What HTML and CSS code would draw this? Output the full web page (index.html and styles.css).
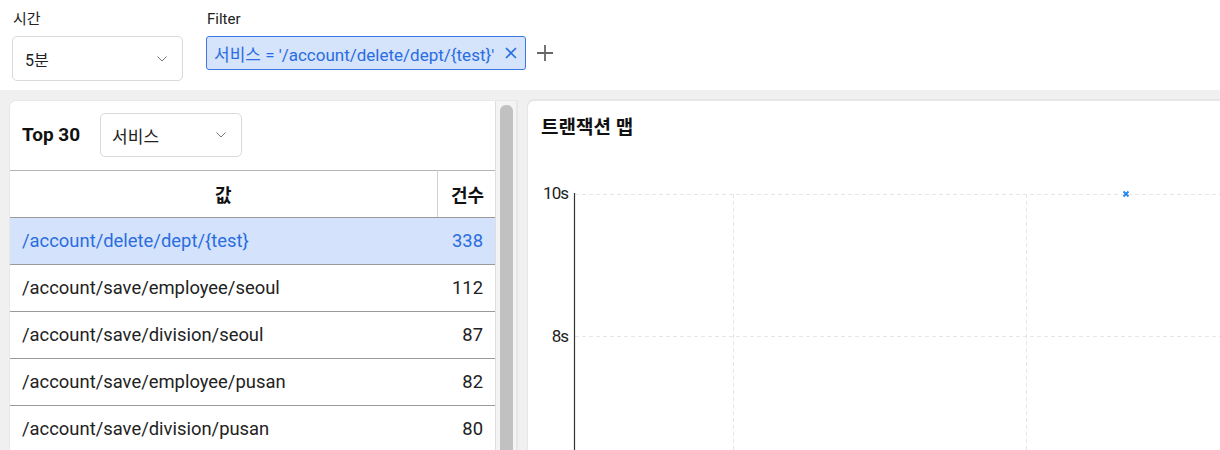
FILE: index.html
```html
<!DOCTYPE html>
<html lang="ko">
<head>
<meta charset="utf-8">
<link rel="stylesheet" href="styles.css">
</head>
<body>
<div class="topbar">
  <div class="field">
    <div class="label">시간</div>
    <div class="select time-select"><span>5분</span>
      <svg class="chev" width="10" height="6" viewBox="0 0 10 6"><path d="M0.5 0.5 L5 5 L9.5 0.5" fill="none" stroke="#777" stroke-width="1"/></svg>
    </div>
  </div>
  <div class="field">
    <div class="label">Filter</div>
    <div class="filter-row">
      <div class="chip"><span>서비스 = '/account/delete/dept/{test}'</span>
        <svg class="chip-x" width="12" height="12" viewBox="0 0 12 12"><path d="M1 1 L11 11 M11 1 L1 11" stroke="#2a6de0" stroke-width="1.6"/></svg>
      </div>
      <svg class="plus" width="18" height="18" viewBox="0 0 18 18"><path d="M9 1 V17 M1 9 H17" stroke="#666" stroke-width="1.8"/></svg>
    </div>
  </div>
</div>
<div class="main">
  <div class="left-panel">
    <div class="left-content">
      <div class="panel-head">
        <div class="panel-title">Top 30</div>
        <div class="select type-select"><span>서비스</span>
          <svg class="chev" width="10" height="6" viewBox="0 0 10 6"><path d="M0.5 0.5 L5 5 L9.5 0.5" fill="none" stroke="#777" stroke-width="1"/></svg>
        </div>
      </div>
      <table class="top-table">
        <thead>
          <tr><th class="c-val">값</th><th class="c-cnt">건수</th></tr>
        </thead>
        <tbody>
          <tr class="selected"><td>/account/delete/dept/{test}</td><td class="num">338</td></tr>
          <tr><td>/account/save/employee/seoul</td><td class="num">112</td></tr>
          <tr><td>/account/save/division/seoul</td><td class="num">87</td></tr>
          <tr><td>/account/save/employee/pusan</td><td class="num">82</td></tr>
          <tr><td>/account/save/division/pusan</td><td class="num">80</td></tr>
        </tbody>
      </table>
    </div>
    <div class="scrollbar"><div class="thumb"></div></div>
  </div>
  <div class="right-panel">
    <div class="panel-title map-title">트랜잭션 맵</div>
    <svg class="chart" width="700" height="300" viewBox="0 0 700 300">
      <g stroke="#e6e6e6" stroke-width="1" stroke-dasharray="4 3" fill="none">
        <line x1="47" y1="43.5" x2="700" y2="43.5"/>
        <line x1="47" y1="185.5" x2="700" y2="185.5"/>
        <line x1="205.5" y1="43" x2="205.5" y2="300"/>
        <line x1="498.5" y1="43" x2="498.5" y2="300"/>
      </g>
      <line x1="46.5" y1="42" x2="46.5" y2="300" stroke="#333" stroke-width="1.2"/>
      <text x="40" y="48" class="axis-label" text-anchor="end">10s</text>
      <text x="40" y="191" class="axis-label" text-anchor="end">8s</text>
      <path d="M595.5 40.5 L600.5 45.5 M600.5 40.5 L595.5 45.5" stroke="#1e88f0" stroke-width="1.8"/>
    </svg>
  </div>
</div>
</body>
</html>
```

FILE: styles.css
```css
* { box-sizing: border-box; }
html, body { margin: 0; padding: 0; }
body {
  width: 1220px;
  height: 450px;
  overflow: hidden;
  background: #f0f0f0;
  font-family: Roboto, "Noto Sans CJK KR", sans-serif;
  color: #1d1d1d;
}
.topbar {
  height: 90px;
  background: #fff;
  display: flex;
  gap: 23px;
  padding: 8px 12px 0 12px;
}
.field { display: flex; flex-direction: column; }
.label {
  font-size: 15px;
  line-height: 22px;
  height: 28px;
  padding-left: 1px;
  color: #222;
}
.select {
  display: flex;
  align-items: center;
  justify-content: space-between;
  border: 1px solid #d9d9d9;
  border-radius: 5px;
  background: #fff;
  font-size: 16px;
  color: #222;
}
.time-select {
  width: 171px;
  height: 45px;
  padding: 0 15px 0 12px;
}
.filter-row { display: flex; align-items: flex-start; gap: 10px; }
.chip {
  display: flex;
  align-items: center;
  width: 320px;
  height: 34px;
  padding: 0 7px 0 7px;
  background: #d5e3fb;
  border: 1px solid #3b7ae4;
  border-radius: 3px;
  color: #2a6de0;
  font-size: 17px;
}
.chip span { flex: 1; white-space: nowrap; }
.chip-x { margin-right: 1px; }
.plus { margin-top: 8px; }

.main {
  display: flex;
  gap: 11px;
  padding: 11px 0 0 10px;
}
.left-panel {
  display: flex;
  width: 507px;
  height: 360px;
  background: #fff;
  border-radius: 6px 0 0 0;
  box-shadow: 0 0 0 1px #e8e8e8;
  overflow: hidden;
}
.left-content { width: 485px; }
.panel-head {
  display: flex;
  gap: 20px;
  padding: 12px 0 0 12px;
  height: 69px;
  align-items: flex-start;
}
.panel-title {
  font-size: 19px;
  font-weight: 700;
  color: #111;
}
.panel-head .panel-title { margin-top: 10px; }
.type-select {
  width: 142px;
  height: 44px;
  padding: 0 15px 0 11px;
  font-size: 17px;
}
.top-table {
  width: 485px;
  border-collapse: collapse;
  font-size: 18.4px;
}
.top-table th {
  height: 47px;
  font-size: 18px;
  font-weight: 700;
  color: #111;
  border-top: 1px solid #b5b5b5;
  border-bottom: 1px solid #9a9a9a;
}
.top-table th.c-val { border-right: 1px solid #d0d0d0; }
.top-table th.c-cnt { width: 58px; text-align: right; padding-right: 11px; }
.top-table td {
  height: 47px;
  padding: 0 12px 1px 12px;
  border-bottom: 1px solid #9a9a9a;
  color: #222;
}
.top-table td.num { text-align: right; padding-right: 12px; }
.top-table tr.selected td { background: #d4e3fb; color: #2a6de0; }
.scrollbar {
  width: 22px;
  background: #f4f4f4;
  border-left: 1px solid #dedede;
  border-right: 1px solid #e6e6e6;
  padding: 4px 3px 0 4px;
}
.thumb {
  height: 400px;
  background: #c1c1c1;
  border-radius: 6px 6px 0 0;
}
.right-panel {
  flex: 1;
  height: 360px;
  background: #fff;
  border-radius: 6px 0 0 0;
  box-shadow: 0 -1px 0 1px #e6e6e6;
  overflow: hidden;
}
.map-title {
  height: 50px;
  padding: 11px 0 0 13px;
}
.chart { display: block; }
.axis-label {
  font-family: Roboto, sans-serif;
  font-size: 17px;
  fill: #222;
  letter-spacing: -1px;
}
```
